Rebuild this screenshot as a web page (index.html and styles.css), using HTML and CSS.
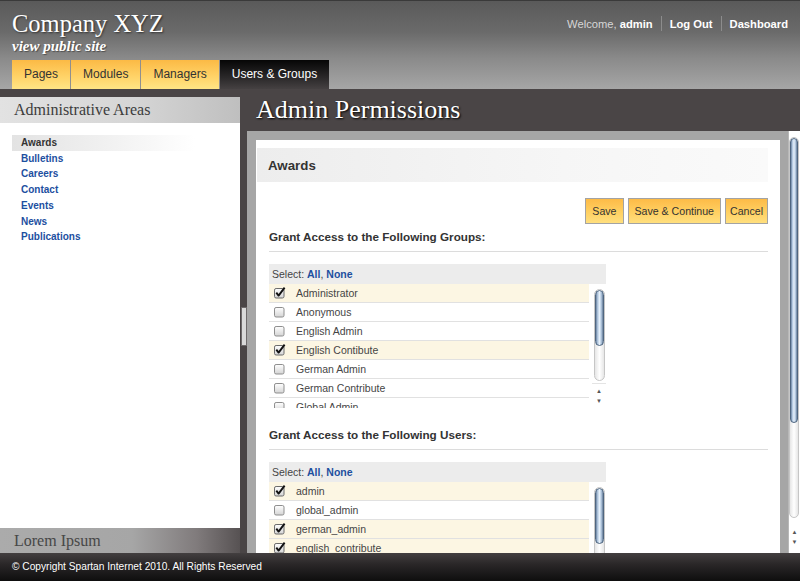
FILE: index.html
```html
<!DOCTYPE html>
<html>
<head>
<meta charset="utf-8">
<title>Admin Permissions</title>
<link rel="stylesheet" href="styles.css">
</head>
<body>
<svg class="defs" width="0" height="0" aria-hidden="true">
  <defs>
    <linearGradient id="boxg" x1="0" y1="0" x2="0" y2="1">
      <stop offset="0" stop-color="#ffffff"/>
      <stop offset="1" stop-color="#d4d4d4"/>
    </linearGradient>
    <symbol id="box" viewBox="0 0 12 12">
      <rect x="0.5" y="1.5" width="9.5" height="9.5" rx="1.6" fill="url(#boxg)" stroke="#8e8e8e"/>
    </symbol>
    <symbol id="chk" viewBox="0 0 12 12">
      <rect x="0.5" y="1.5" width="9.5" height="9.5" rx="1.6" fill="url(#boxg)" stroke="#6a6a6a"/>
      <path d="M2.3 5.6 L4.6 8.6 L10.6 0.6" fill="none" stroke="#111" stroke-width="1.9" stroke-linejoin="round"/>
    </symbol>
  </defs>
</svg>
<div class="page">
  <header class="top">
    <div class="brand">
      <div class="logo">Company XYZ</div>
      <a class="public" href="#">view public site</a>
      <nav class="tabs">
        <a class="tab" href="#">Pages</a>
        <a class="tab" href="#">Modules</a>
        <a class="tab" href="#">Managers</a>
        <a class="tab active" href="#">Users &amp; Groups</a>
      </nav>
    </div>
    <div class="userbar">
      <span class="welcome">Welcome, <b>admin</b></span>
      <span class="sep"></span>
      <a href="#">Log Out</a>
      <span class="sep"></span>
      <a href="#">Dashboard</a>
    </div>
  </header>

  <div class="body">
    <aside class="side">
      <div class="side-head">Administrative Areas</div>
      <ul class="side-list">
        <li class="cur">Awards</li>
        <li><a href="#">Bulletins</a></li>
        <li><a href="#">Careers</a></li>
        <li><a href="#">Contact</a></li>
        <li><a href="#">Events</a></li>
        <li><a href="#">News</a></li>
        <li><a href="#">Publications</a></li>
      </ul>
      <div class="side-foot">Lorem Ipsum</div>
    </aside>

    <div class="splitter"><div class="handle"></div></div>

    <main class="main">
      <h1>Admin Permissions</h1>
      <div class="frame-row">
        <div class="frame">
          <div class="panel">
            <div class="ph">Awards</div>
            <div class="pc">
              <div class="btns">
                <button class="btn">Save</button>
                <button class="btn">Save &amp; Continue</button>
                <button class="btn tight">Cancel</button>
              </div>

              <h2 class="gh">Grant Access to the Following Groups:</h2>
              <div class="list">
                <div class="lhead">Select: <a href="#">All</a>, <a href="#">None</a></div>
                <div class="lbody">
                  <div class="rows">
                    <div class="row on"><svg class="cb"><use href="#chk"/></svg>Administrator</div>
                    <div class="row"><svg class="cb"><use href="#box"/></svg>Anonymous</div>
                    <div class="row"><svg class="cb"><use href="#box"/></svg>English Admin</div>
                    <div class="row on"><svg class="cb"><use href="#chk"/></svg>English Contibute</div>
                    <div class="row"><svg class="cb"><use href="#box"/></svg>German Admin</div>
                    <div class="row"><svg class="cb"><use href="#box"/></svg>German Contribute</div>
                    <div class="row"><svg class="cb"><use href="#box"/></svg>Global Admin</div>
                  </div>
                  <div class="sb sb-list">
                    <div class="sb-track"><div class="sb-thumb"></div></div>
                    <div class="sb-arrows"><span>&#9650;</span><span>&#9660;</span></div>
                  </div>
                </div>
              </div>

              <h2 class="gh">Grant Access to the Following Users:</h2>
              <div class="list">
                <div class="lhead">Select: <a href="#">All</a>, <a href="#">None</a></div>
                <div class="lbody">
                  <div class="rows">
                    <div class="row on"><svg class="cb"><use href="#chk"/></svg>admin</div>
                    <div class="row"><svg class="cb"><use href="#box"/></svg>global_admin</div>
                    <div class="row on"><svg class="cb"><use href="#chk"/></svg>german_admin</div>
                    <div class="row on"><svg class="cb"><use href="#chk"/></svg>english_contribute</div>
                  </div>
                  <div class="sb sb-list">
                    <div class="sb-track"><div class="sb-thumb"></div></div>
                    <div class="sb-arrows"><span>&#9650;</span><span>&#9660;</span></div>
                  </div>
                </div>
              </div>
            </div>
          </div>
        </div>
        <div class="sb sb-main">
          <div class="sb-track"><div class="sb-thumb"></div></div>
          <div class="sb-arrows"><span>&#9650;</span><span>&#9660;</span></div>
        </div>
      </div>
    </main>
  </div>

  <footer class="foot">&copy; Copyright Spartan Internet 2010. All Rights Reserved</footer>
</div>
</body>
</html>
```

FILE: styles.css
```css
* { box-sizing: border-box; margin: 0; padding: 0; }
html, body { width: 800px; height: 581px; overflow: hidden; }
body {
  font-family: "Liberation Sans", Arial, sans-serif;
  background: #4a4546;
}
a { text-decoration: none; }
.defs { position: absolute; width: 0; height: 0; overflow: hidden; }

.page { display: flex; flex-direction: column; height: 581px; }

/* header */
.top {
  flex: none;
  height: 89px;
  display: flex;
  justify-content: space-between;
  padding-left: 12px;
  border-top: 1px solid #3a3a3a;
  background: linear-gradient(#5a5a5a, #6a6a6a 35%, #8a8a8a 65%, #a6a6a6);
}
.brand { display: flex; flex-direction: column; }
.logo {
  font-family: "Liberation Serif", "Times New Roman", serif;
  font-size: 24.5px;
  line-height: 30px;
  padding-top: 8px;
  color: #fff;
  text-shadow: 1px 1px 2px rgba(0,0,0,0.55);
}
.public {
  font-family: "Liberation Serif", "Times New Roman", serif;
  font-size: 15px;
  font-weight: bold;
  font-style: italic;
  line-height: 14px;
  color: #fff;
  text-shadow: 1px 1px 1px rgba(0,0,0,0.4);
}
.tabs { display: flex; margin-top: auto; height: 29px; }
.tab {
  height: 29px;
  line-height: 28px;
  padding: 0 12px;
  font-size: 12px;
  color: #333;
  border-right: 1px solid #8f8f8f;
  background: linear-gradient(#fbba45, #ffd266 55%, #ffe585);
}
.tab.active {
  color: #fff;
  border-right: 0;
  background: linear-gradient(#060606, #2a2829 60%, #454142);
}
.userbar {
  display: flex;
  align-items: center;
  align-self: flex-start;
  padding: 15px 12px 0 0;
  font-size: 11.2px;
  color: #fff;
}
.userbar a { color: #fff; font-weight: bold; }
.welcome { color: #d6d6d6; }
.welcome b { color: #fff; }
.sep { width: 1px; height: 15px; background: #8c8c8c; margin: 0 8px; }

/* body */
.body { flex: 1; display: flex; min-height: 0; }

.side { width: 240px; flex: none; display: flex; flex-direction: column; padding-top: 8px; }
.side-head {
  height: 26px;
  line-height: 26px;
  padding-left: 14px;
  font-family: "Liberation Serif", "Times New Roman", serif;
  font-size: 16px;
  color: #3c3c3c;
  background: linear-gradient(to right, #e2e2e2, #d6d6d6 55%, #bfbfbf);
}
.side-list {
  flex: 1;
  list-style: none;
  background: #fff;
  padding-top: 12px;
}
.side-list li {
  font-size: 10px;
  font-weight: bold;
  line-height: 15.7px;
  padding-left: 21px;
}
.side-list li a { color: #1d4f9f; }
.side-list li.cur {
  margin-left: 12px;
  padding-left: 9px;
  width: 183px;
  color: #333;
  background: linear-gradient(to right, #e3e3e3, #f3f3f3 60%, #fff);
}
.side-foot {
  height: 25px;
  line-height: 25px;
  padding-left: 14px;
  font-family: "Liberation Serif", "Times New Roman", serif;
  font-size: 16px;
  color: #474747;
  background: linear-gradient(to right, #ababab, #a6a6a6 55%, #807b7c 82%, #575253);
}

.splitter {
  width: 7px;
  flex: none;
  display: flex;
  align-items: center;
  padding-top: 10px;
  background: #4a4546;
}
.handle {
  width: 6px;
  height: 39px;
  margin-left: 1px;
  background: #d9d9d9;
  border: 1px solid #6e6a6b;
}

.main { flex: 1; display: flex; flex-direction: column; min-width: 0; }
.main h1 {
  flex: none;
  height: 42px;
  line-height: 42px;
  padding-left: 9px;
  font-family: "Liberation Serif", "Times New Roman", serif;
  font-size: 26px;
  font-weight: normal;
  color: #fff;
  text-shadow: 1px 1px 2px #000;
}
.frame-row { flex: 1; display: flex; min-height: 0; }
.frame {
  flex: 1;
  display: flex;
  min-width: 0;
  padding: 9px 8px 0 9px;
  background: #a6a6a6;
  overflow: hidden;
}
.panel {
  flex: 1;
  background: #fff;
  padding: 8px 12px 0 1px;
  overflow: hidden;
}
.ph {
  height: 34px;
  line-height: 35px;
  padding-left: 11px;
  font-size: 13.3px;
  font-weight: bold;
  color: #333;
  background: linear-gradient(to right, #ededed, #f6f6f6 60%, #fafafa);
}
.pc { padding-left: 12px; }
.btns { display: flex; justify-content: flex-end; gap: 4px; margin-top: 16px; }
.btn {
  height: 26px;
  padding: 0 6px;
  font-family: "Liberation Sans", Arial, sans-serif;
  font-size: 10.6px;
  color: #333;
  border: 1px solid #a3a3a3;
  background: linear-gradient(#fdbb47, #ffd062 55%, #ffdf7e);
}
.btn.tight { padding: 0 4px; }

.gh {
  margin-top: 6px;
  padding-bottom: 7px;
  line-height: 14px;
  font-size: 11.7px;
  font-weight: bold;
  color: #333;
  border-bottom: 1px solid #dcdcdc;
}
.list + .gh { margin-top: 20px; }

.list { margin-top: 12px; width: 337px; }
.lhead {
  height: 20px;
  line-height: 20px;
  padding-left: 3px;
  font-size: 10.5px;
  color: #444;
  background: #ececec;
}
.lhead a { color: #1d4f9f; font-weight: bold; }
.lbody { display: flex; gap: 3px; height: 124px; }
.rows { width: 320px; overflow: hidden; }
.row {
  display: flex;
  align-items: center;
  height: 19px;
  padding-left: 5px;
  font-size: 10.5px;
  color: #454545;
  border-bottom: 1px solid #e1e1e1;
}
.row.on { background: #fcf6e3; }
.cb { width: 12px; height: 12px; margin-right: 10px; flex: none; }

/* scrollbars */
.sb {
  display: flex;
  flex-direction: column;
  background: #fff;
  flex: none;
}
.sb-track {
  flex: 1;
  border: 1px solid #c6c6c6;
  border-radius: 6px;
  background: linear-gradient(to right, #e6e6e6, #fff 50%, #e6e6e6);
  overflow: hidden;
}
.sb-thumb {
  border: 1px solid #4f6680;
  border-radius: 6px;
  background: linear-gradient(to right, #6b83a1, #b6cbe2 25%, #e7f1fb 50%, #b2c7de 75%, #687e99);
}
.sb-arrows {
  display: flex;
  flex-direction: column;
  justify-content: center;
  align-items: center;
  gap: 3px;
  font-size: 6px;
  line-height: 7px;
  color: #555;
}
.sb-main { width: 12px; border-left: 1px solid #b8b8b8; }
.sb-main .sb-track { margin: 6px 1px 3px 0; }
.sb-main .sb-thumb { height: 285px; }
.sb-main .sb-arrows { height: 32px; }

.sb-list { width: 14px; }
.sb-list .sb-track { margin: 5px 1px 2px 2px; }
.sb-list .sb-thumb { height: 56px; }
.sb-list .sb-arrows { height: 25px; border-top: 1px solid #e4e4e4; }

.foot {
  flex: none;
  height: 28px;
  line-height: 28px;
  padding-left: 12px;
  font-size: 10.2px;
  color: #fff;
  background: linear-gradient(#433f40, #2a2728 40%, #0e0e0e);
}
```
